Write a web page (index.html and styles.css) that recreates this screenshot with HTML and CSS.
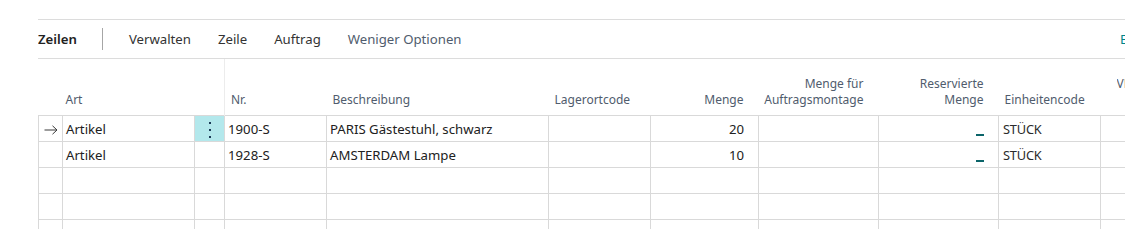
FILE: index.html
```html
<!DOCTYPE html>
<html lang="de">
<head>
<meta charset="utf-8">
<link rel="stylesheet" href="styles.css">
</head>
<body>
<div class="page">
  <div class="toolbar">
    <span class="tab active">Zeilen</span>
    <span class="sep"></span>
    <span class="tab">Verwalten</span>
    <span class="tab">Zeile</span>
    <span class="tab">Auftrag</span>
    <span class="tab less">Weniger Optionen</span>
    <span class="spacer"></span>
    <span class="tab edit">Erweitern</span>
  </div>
  <table class="grid">
    <colgroup>
      <col class="c-ind"><col class="c-art"><col class="c-menu"><col class="c-nr"><col class="c-desc"><col class="c-lager"><col class="c-menge"><col class="c-mont"><col class="c-res"><col class="c-einh"><col class="c-vk">
    </colgroup>
    <thead>
      <tr>
        <th></th>
        <th class="l art">Art</th>
        <th class="menuh"></th>
        <th class="l">Nr.</th>
        <th class="l">Beschreibung</th>
        <th class="l">Lagerortcode</th>
        <th class="r">Menge</th>
        <th class="r">Menge für<br>Auftragsmontage</th>
        <th class="r">Reservierte<br>Menge</th>
        <th class="l">Einheitencode</th>
        <th class="l vk"><div class="clip">VK-Preis Exkl. MwSt.<br>&nbsp;</div></th>
      </tr>
    </thead>
    <tbody>
      <tr>
        <td class="ind"><svg class="arrow" width="14" height="10" viewBox="0 0 14 10"><path d="M0.5 5H13M8.5 0.8L13 5L8.5 9.2" fill="none" stroke="#3a3a3a" stroke-width="1"/></svg></td>
        <td class="l art">Artikel</td>
        <td class="menu"><span class="dots"><i></i><i></i><i></i></span></td>
        <td class="l">1900-S</td>
        <td class="l">PARIS Gästestuhl, schwarz</td>
        <td></td>
        <td class="r">20</td>
        <td></td>
        <td class="r"><span class="dash"></span></td>
        <td class="l unit">STÜCK</td>
        <td></td>
      </tr>
      <tr>
        <td class="ind"></td>
        <td class="l art">Artikel</td>
        <td></td>
        <td class="l">1928-S</td>
        <td class="l">AMSTERDAM Lampe</td>
        <td></td>
        <td class="r">10</td>
        <td></td>
        <td class="r"><span class="dash"></span></td>
        <td class="l unit">STÜCK</td>
        <td></td>
      </tr>
      <tr class="empty"><td></td><td></td><td></td><td></td><td></td><td></td><td></td><td></td><td></td><td></td><td></td></tr>
      <tr class="empty"><td></td><td></td><td></td><td></td><td></td><td></td><td></td><td></td><td></td><td></td><td></td></tr>
      <tr class="empty"><td></td><td></td><td></td><td></td><td></td><td></td><td></td><td></td><td></td><td></td><td></td></tr>
    </tbody>
  </table>
</div>
</body>
</html>
```

FILE: styles.css
```css
html, body {
  margin: 0;
  padding: 0;
  background: #ffffff;
  overflow: hidden;
}
body {
  width: 1125px;
  height: 229px;
  font-family: "Noto Sans", "Open Sans", sans-serif;
  color: #212121;
}
.page {
  padding-top: 19px;
  padding-left: 38px;
  overflow: hidden;
  height: 210px;
}
.toolbar {
  display: flex;
  align-items: center;
  height: 38px;
  border-top: 1px solid #dcdcdc;
  border-bottom: 1px solid #dcdcdc;
  white-space: nowrap;
  overflow: hidden;
  font-size: 13.2px;
}
.tab {
  color: #333333;
  margin-right: 27px;
  line-height: 20px;
}
.tab.active {
  font-weight: 600;
  color: #212121;
  margin-right: 25px;
}
.sep {
  width: 1px;
  height: 22px;
  background: #a6a6a6;
  margin-right: 26px;
}
.tab.less {
  color: #505c6d;
}
.spacer {
  flex: 1;
}
.tab.edit {
  color: #008489;
  margin-right: 0;
  flex: 0 0 5px;
  width: 5px;
  overflow: visible;
}
.grid {
  border-collapse: collapse;
  table-layout: fixed;
  width: 1162px;
}
.c-ind { width: 24px; }
.c-art { width: 132px; }
.c-menu { width: 30px; }
.c-nr { width: 102px; }
.c-desc { width: 222px; }
.c-lager { width: 102px; }
.c-menge { width: 108px; }
.c-mont { width: 120px; }
.c-res { width: 120px; }
.c-einh { width: 102px; }
.c-vk { width: 100px; }
thead th {
  height: 49px;
  padding: 0 0 7px 0;
  vertical-align: bottom;
  font-weight: 400;
  font-size: 12px;
  line-height: 16px;
  color: #505c6d;
  white-space: nowrap;
  border: none;
}
thead th.menuh {
  border-right: 1px solid #ececec;
}
th.l { text-align: left; padding-left: 6px; }
th.l.art { padding-left: 3px; }
th.r { text-align: right; padding-right: 15px; }
th.vk { padding-left: 16px; overflow: hidden; }
.clip { overflow: hidden; white-space: nowrap; }
tbody td {
  height: 25px;
  padding: 0;
  border: 1px solid #d9d9d9;
  font-size: 13.2px;
  line-height: 20px;
  white-space: nowrap;
  overflow: hidden;
  color: #212121;
}
td.l { padding-left: 3px; }
td.unit { padding-left: 4px; font-size: 12.8px; letter-spacing: -0.2px; color: #2b2b2b; }
td.r { text-align: right; padding-right: 14px; }
td.ind { text-align: center; }
.arrow {
  display: inline-block;
  vertical-align: middle;
}
td.menu {
  background: #b3e8ec;
  text-align: center;
}
.dots {
  display: inline-flex;
  flex-direction: column;
  gap: 5px;
  vertical-align: middle;
}
.dots i {
  display: block;
  width: 2px;
  height: 2px;
  background: #1b3a57;
}
.dash {
  display: inline-block;
  width: 8px;
  height: 2px;
  background: #0b6469;
  vertical-align: -2px;
}
```
